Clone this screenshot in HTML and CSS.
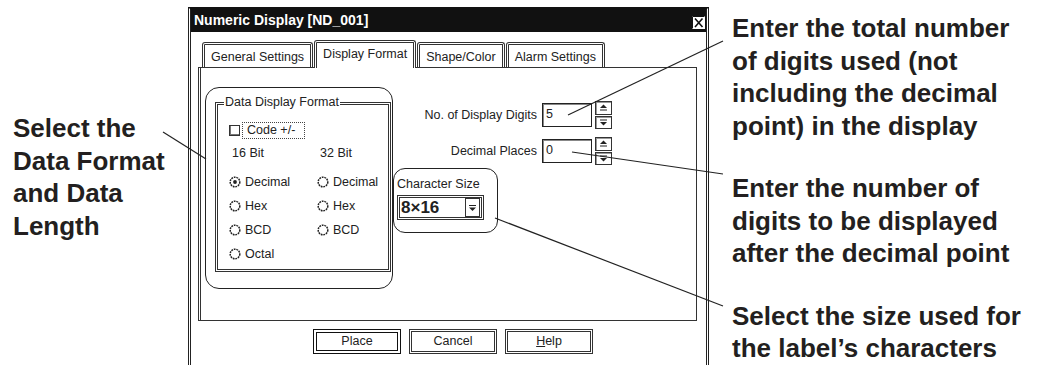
FILE: index.html
```html
<!DOCTYPE html>
<html>
<head>
<meta charset="utf-8">
<title>Numeric Display [ND_001]</title>
<link rel="stylesheet" href="styles.css">
</head>
<body>
<div class="page">

  <div class="note note-left">Select the<br>Data Format<br>and Data<br>Length</div>

  <div class="dialog">
    <div class="titlebar">
      <span class="title">Numeric Display [ND_001]</span>
      <span class="close">
        <svg width="15" height="15" viewBox="0 0 15 15">
          <rect x="0.5" y="0.5" width="14" height="14" fill="#fff" stroke="#111"/>
          <path d="M1.5 1.5v12M1.5 1.5h12" stroke="#111" stroke-width="1"/>
          <path d="M4 3.5l7.5 8.5M11.5 3.5L4 12" stroke="#111" stroke-width="1.6"/>
        </svg>
      </span>
    </div>

    <div class="tabs">
      <span class="tab">General Settings</span>
      <span class="tab active">Display Format</span>
      <span class="tab">Shape/Color</span>
      <span class="tab">Alarm Settings</span>
    </div>

    <div class="panel">
      <div class="ring ring-format">
        <div class="group">
          <span class="legend">Data Display Format</span>
          <div class="check-row">
            <span class="checkbox"></span>
            <span class="focus">Code +/-</span>
          </div>
          <div class="bits">
            <span>16 Bit</span>
            <span>32 Bit</span>
          </div>
          <div class="radios">
            <span class="radio"><svg width="12" height="12" viewBox="0 0 12 12"><circle cx="6" cy="6" r="4.8" fill="none" stroke="#222" stroke-width="1.5" stroke-dasharray="1.8 0.8"/><circle cx="6" cy="6" r="1.9" fill="#222"/></svg>Decimal</span>
            <span class="radio"><svg width="12" height="12" viewBox="0 0 12 12"><circle cx="6" cy="6" r="4.8" fill="none" stroke="#222" stroke-width="1.5" stroke-dasharray="1.8 0.8"/></svg>Decimal</span>
            <span class="radio"><svg width="12" height="12" viewBox="0 0 12 12"><circle cx="6" cy="6" r="4.8" fill="none" stroke="#222" stroke-width="1.5" stroke-dasharray="1.8 0.8"/></svg>Hex</span>
            <span class="radio"><svg width="12" height="12" viewBox="0 0 12 12"><circle cx="6" cy="6" r="4.8" fill="none" stroke="#222" stroke-width="1.5" stroke-dasharray="1.8 0.8"/></svg>Hex</span>
            <span class="radio"><svg width="12" height="12" viewBox="0 0 12 12"><circle cx="6" cy="6" r="4.8" fill="none" stroke="#222" stroke-width="1.5" stroke-dasharray="1.8 0.8"/></svg>BCD</span>
            <span class="radio"><svg width="12" height="12" viewBox="0 0 12 12"><circle cx="6" cy="6" r="4.8" fill="none" stroke="#222" stroke-width="1.5" stroke-dasharray="1.8 0.8"/></svg>BCD</span>
            <span class="radio"><svg width="12" height="12" viewBox="0 0 12 12"><circle cx="6" cy="6" r="4.8" fill="none" stroke="#222" stroke-width="1.5" stroke-dasharray="1.8 0.8"/></svg>Octal</span>
          </div>
        </div>
      </div>

      <div class="side">
        <div class="fields">
          <div class="field">
            <span class="field-label">No. of Display Digits</span>
            <span class="input">5</span>
            <span class="spin">
              <span class="spin-btn"><svg width="9" height="7" viewBox="0 0 9 7"><path d="M4.5 0.5L8 4H1z" fill="#222"/><path d="M1 6h7" stroke="#222"/></svg></span>
              <span class="spin-btn"><svg width="9" height="7" viewBox="0 0 9 7"><path d="M1 1h7" stroke="#222"/><path d="M1 3h7L4.5 6.5z" fill="#222"/></svg></span>
            </span>
          </div>
          <div class="field">
            <span class="field-label">Decimal Places</span>
            <span class="input">0</span>
            <span class="spin">
              <span class="spin-btn"><svg width="9" height="7" viewBox="0 0 9 7"><path d="M4.5 0.5L8 4H1z" fill="#222"/><path d="M1 6h7" stroke="#222"/></svg></span>
              <span class="spin-btn"><svg width="9" height="7" viewBox="0 0 9 7"><path d="M1 1h7" stroke="#222"/><path d="M1 3h7L4.5 6.5z" fill="#222"/></svg></span>
            </span>
          </div>
        </div>

        <div class="ring ring-size">
          <div class="size-label">Character Size</div>
          <div class="combo">
            <span class="combo-value">8×16</span>
            <span class="combo-btn"><svg width="9" height="8" viewBox="0 0 9 8"><path d="M1 1.5h7" stroke="#222"/><path d="M1 3.5h7L4.5 7z" fill="#222"/></svg></span>
          </div>
        </div>
      </div>
    </div>

    <div class="buttons">
      <span class="button default">Place</span>
      <span class="button">Cancel</span>
      <span class="button"><u>H</u>elp</span>
    </div>
  </div>

  <div class="notes-right">
    <div class="note">Enter the total number<br>of digits used (not<br>including the decimal<br>point) in the display</div>
    <div class="note">Enter the number of<br>digits to be displayed<br>after the decimal point</div>
    <div class="note">Select the size used for<br>the label’s characters</div>
  </div>

  <!-- leader lines from the notes to the controls -->
  <svg class="leaders" width="1041" height="365" viewBox="0 0 1041 365">
    <g stroke="#222" stroke-width="1.2" fill="none">
      <path d="M163 132L206 159"/>
      <path d="M723 41L568 115"/>
      <path d="M723 174L572 152"/>
      <path d="M723 306L495 218"/>
    </g>
  </svg>
</div>
</body>
</html>
```

FILE: styles.css
```css
body {
  margin: 0;
  font-family: "Liberation Sans", Arial, sans-serif;
  color: #222;
  background: #fff;
}

.page {
  position: relative;
  display: flex;
  align-items: flex-start;
  width: 1041px;
  height: 365px;
  overflow: hidden;
}

.note {
  font-size: 26px;
  font-weight: bold;
  line-height: 32.5px;
  color: #231f20;
  white-space: nowrap;
}

.note-left {
  width: 175px;
  padding: 112px 0 0 13px;
}

.notes-right {
  margin-left: 23px;
  padding-top: 12px;
}

.notes-right .note + .note {
  margin-top: 30px;
}

.leaders {
  position: absolute;
  top: 0;
  left: 0;
  pointer-events: none;
}

/* dialog window */

.dialog {
  width: 515px;
  height: 400px;
  margin-top: 7px;
  border: 3px double #222;
  border-top: 3px solid #111;
  border-bottom: none;
  font-size: 12.5px;
}

.titlebar {
  display: flex;
  justify-content: space-between;
  height: 22px;
  padding-left: 3px;
  background: #111;
}

.title {
  color: #fff;
  font-size: 14px;
  font-weight: bold;
  line-height: 21px;
}

.close {
  margin-top: 5px;
  height: 15px;
}

.close svg {
  display: block;
}

.tabs {
  position: relative;
  z-index: 1;
  display: flex;
  align-items: flex-end;
  gap: 1px;
  height: 28px;
  margin: 8px 0 -1px 11px;
}

.tab {
  height: 22px;
  margin-bottom: 1px;
  padding: 0 6px;
  border: 3px double #333;
  border-bottom: none;
  border-radius: 3px 3px 0 0;
  line-height: 24px;
  background: #fff;
}

.tab.active {
  height: 25px;
  margin-bottom: 0;
  line-height: 22px;
}

.panel {
  display: flex;
  align-items: flex-start;
  width: 495px;
  height: 252px;
  margin-left: 7px;
  border: 1px solid #333;
  border-left: 3px double #333;
}

.ring {
  border: 1px solid #222;
  box-sizing: border-box;
}

.ring-format {
  width: 188px;
  height: 202px;
  margin: 19px 0 0 4px;
  border-radius: 14px;
}

.group {
  position: relative;
  width: 159px;
  height: 147px;
  margin: 14px 0 0 9px;
  padding: 17px 0 0 11px;
  border: 3px double #333;
}

.legend {
  position: absolute;
  top: -11px;
  left: 6px;
  padding: 0 1px;
  line-height: 16px;
  background: #fff;
}

.check-row {
  display: flex;
  align-items: center;
  height: 17px;
}

.checkbox {
  width: 9px;
  height: 9px;
  margin-right: 2px;
  border: 1px solid #333;
  box-shadow: inset 1px -1px 0 #777;
}

.focus {
  height: 15px;
  padding: 0 9px 0 4px;
  border: 1px dotted #444;
  line-height: 15px;
}

.bits {
  display: grid;
  grid-template-columns: 88px 88px;
  height: 18px;
  margin-top: 5px;
  padding-left: 3px;
  line-height: 18px;
}

.radios {
  display: grid;
  grid-template-columns: 88px 88px;
  grid-auto-rows: 18px;
  row-gap: 6px;
  margin-top: 11px;
}

.radio {
  display: flex;
  align-items: center;
  gap: 4px;
}

.side {
  display: flex;
  flex-direction: column;
}

.fields {
  display: flex;
  flex-direction: column;
  gap: 10px;
  margin: 34px 0 0 4px;
}

.field {
  display: flex;
  align-items: center;
  height: 26px;
}

.field-label {
  width: 140px;
  margin-right: 5px;
  text-align: right;
}

.input {
  width: 45px;
  height: 22px;
  padding-left: 3px;
  border: 1px solid #222;
  box-shadow: inset 1px 1px 0 #888;
  line-height: 21px;
}

.spin {
  display: flex;
  flex-direction: column;
  gap: 1px;
  margin-left: 3px;
}

.spin-btn {
  display: flex;
  align-items: center;
  justify-content: center;
  width: 15px;
  height: 11.5px;
  border: 1px solid #333;
  box-shadow: inset 1px 1px 0 #999;
}

.ring-size {
  width: 105px;
  height: 65px;
  margin-top: 4px;
  padding: 7px 0 0 3px;
  border-radius: 12px;
}

.size-label {
  line-height: 16px;
}

.combo {
  display: flex;
  align-items: center;
  justify-content: space-between;
  width: 81px;
  height: 19px;
  margin-top: 3px;
  border: 3px double #333;
}

.combo-value {
  padding-left: 1px;
  font-size: 17px;
  font-weight: bold;
  line-height: 19px;
}

.combo-btn {
  display: flex;
  align-items: center;
  justify-content: center;
  width: 13px;
  height: 17px;
  margin-right: 1px;
  border: 1px solid #333;
}

.buttons {
  display: flex;
  gap: 8px;
  margin: 8px 0 0 122px;
}

.button {
  width: 88px;
  height: 25px;
  box-sizing: border-box;
  border: 3px double #333;
  line-height: 19px;
  text-align: center;
}

.button.default {
  border: 4px double #111;
  line-height: 17px;
}
```
